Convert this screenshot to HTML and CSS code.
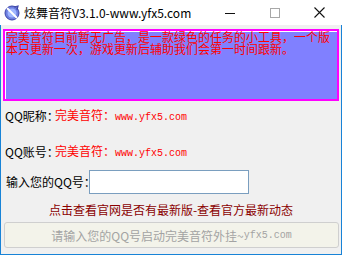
FILE: index.html
```html
<!DOCTYPE html>
<html>
<head>
<meta charset="utf-8">
<link rel="stylesheet" href="styles.css">
</head>
<body>
<div class="window">
  <div class="titlebar">
    <svg class="app-icon" width="16" height="16" viewBox="0 0 16 16">
      <circle cx="8" cy="8" r="7" fill="#6d7fe0" stroke="#3a44a8" stroke-width="1"/>
      <circle cx="8" cy="8" r="4.5" fill="#9fb6ff"/>
      <path d="M3 3 L13 13" stroke="#ffffff" stroke-width="2"/>
      <path d="M10 2 L14 1 L13 5" stroke="#3a44a8" stroke-width="1.2" fill="none"/>
    </svg>
    <span class="title">炫舞音符V3.1.0-www.yfx5.com</span>
    <div class="controls">
      <span class="ctl ctl-min"><span class="min-line"></span></span>
      <span class="ctl ctl-max"><span class="max-box"></span></span>
      <span class="ctl ctl-close">
        <svg width="11" height="11" viewBox="0 0 11 11"><path d="M0.5 0.5 L10.5 10.5 M10.5 0.5 L0.5 10.5" stroke="#111" stroke-width="1.1"/></svg>
      </span>
    </div>
  </div>
  <div class="client">
    <div class="notice">完美音符目前暂无广告，是一款绿色的任务的小工具，一个版本只更新一次，游戏更新后辅助我们会第一时间跟新。</div>
    <div class="row row-nick"><span class="label">QQ昵称：</span><span class="red">完美音符：<span class="mono">www.yfx5.com</span></span></div>
    <div class="row row-acct"><span class="label">QQ账号：</span><span class="red">完美音符：<span class="mono">www.yfx5.com</span></span></div>
    <div class="row row-input"><span class="label">输入您的QQ号：</span><span class="input"></span></div>
    <div class="link">点击查看官网是否有最新版-查看官方最新动态</div>
    <div class="button">请输入您的QQ号启动完美音符外挂~<span class="mono">yfx5.com</span></div>
  </div>
</div>
</body>
</html>
```

FILE: styles.css
```css
* { box-sizing: border-box; }
html, body { margin: 0; padding: 0; }
body {
  width: 342px;
  height: 255px;
  overflow: hidden;
  font-family: "Noto Sans CJK SC", "Liberation Sans", sans-serif;
  font-size: 12px;
  background: #f0f0f0;
}
.window {
  width: 342px;
  height: 255px;
  display: flex;
  flex-direction: column;
}
.titlebar {
  height: 25px;
  background: #ffffff;
  display: flex;
  align-items: center;
  flex: none;
}
.app-icon { margin-left: 4px; margin-top: 0px; flex: none; }
.title {
  margin-left: 4px;
  font-size: 12px;
  color: #000;
  line-height: 25px;
  white-space: nowrap;
}
.controls {
  margin-left: auto;
  display: flex;
  height: 25px;
}
.ctl {
  width: 45px;
  height: 25px;
  display: flex;
  align-items: center;
  justify-content: center;
}
.min-line { width: 10px; height: 1px; background: #111; margin-top: 1px; }
.max-box { width: 10px; height: 10px; border: 1px solid #a8a8a8; }
.ctl-close svg { display: block; }
.client {
  flex: 1;
  border: 1px solid #1883d7;
  border-top: none;
  background: #f0f0f0;
  padding: 4px 2px 0 2px;
  display: flex;
  flex-direction: column;
}
.notice {
  width: 336px;
  height: 72px;
  border: 2px solid #ff00ff;
  box-shadow: inset 1px 1px 0 #ffffff;
  background: #8080ff;
  color: #ff0000;
  font-size: 12px;
  line-height: 12px;
  padding: 0 1px 0 1px;
  letter-spacing: 0;
}
.row {
  display: flex;
  align-items: center;
  padding-left: 2px;
  line-height: 12px;
}
.label { color: #000; width: 50px; flex: none; white-space: nowrap; }
.red { color: #ff0000; white-space: nowrap; }
.mono { font-family: "Liberation Mono", monospace; font-size: 10px; }
.row-nick { margin-top: 9px; height: 12px; }
.row-acct { margin-top: 24px; height: 12px; }
.row-input { margin-top: 12px; height: 24px; padding-left: 3px; }
.row-input .label { width: 83px; }
.input {
  width: 160px;
  height: 24px;
  background: #ffffff;
  border: 1px solid #7a9ebf;
}
.link {
  margin-top: 10px;
  text-align: center;
  color: #8b0000;
  line-height: 12px;
  height: 12px;
  padding-left: 0;
}
.button {
  margin-top: 6px;
  width: 335px;
  margin-left: 1px;
  height: 26px;
  border: 1px solid #cfcfcf;
  border-radius: 3px;
  background: #f3f3ea;
  color: #a3a3a3;
  display: flex;
  align-items: center;
  justify-content: center;
  white-space: nowrap;
}
```
